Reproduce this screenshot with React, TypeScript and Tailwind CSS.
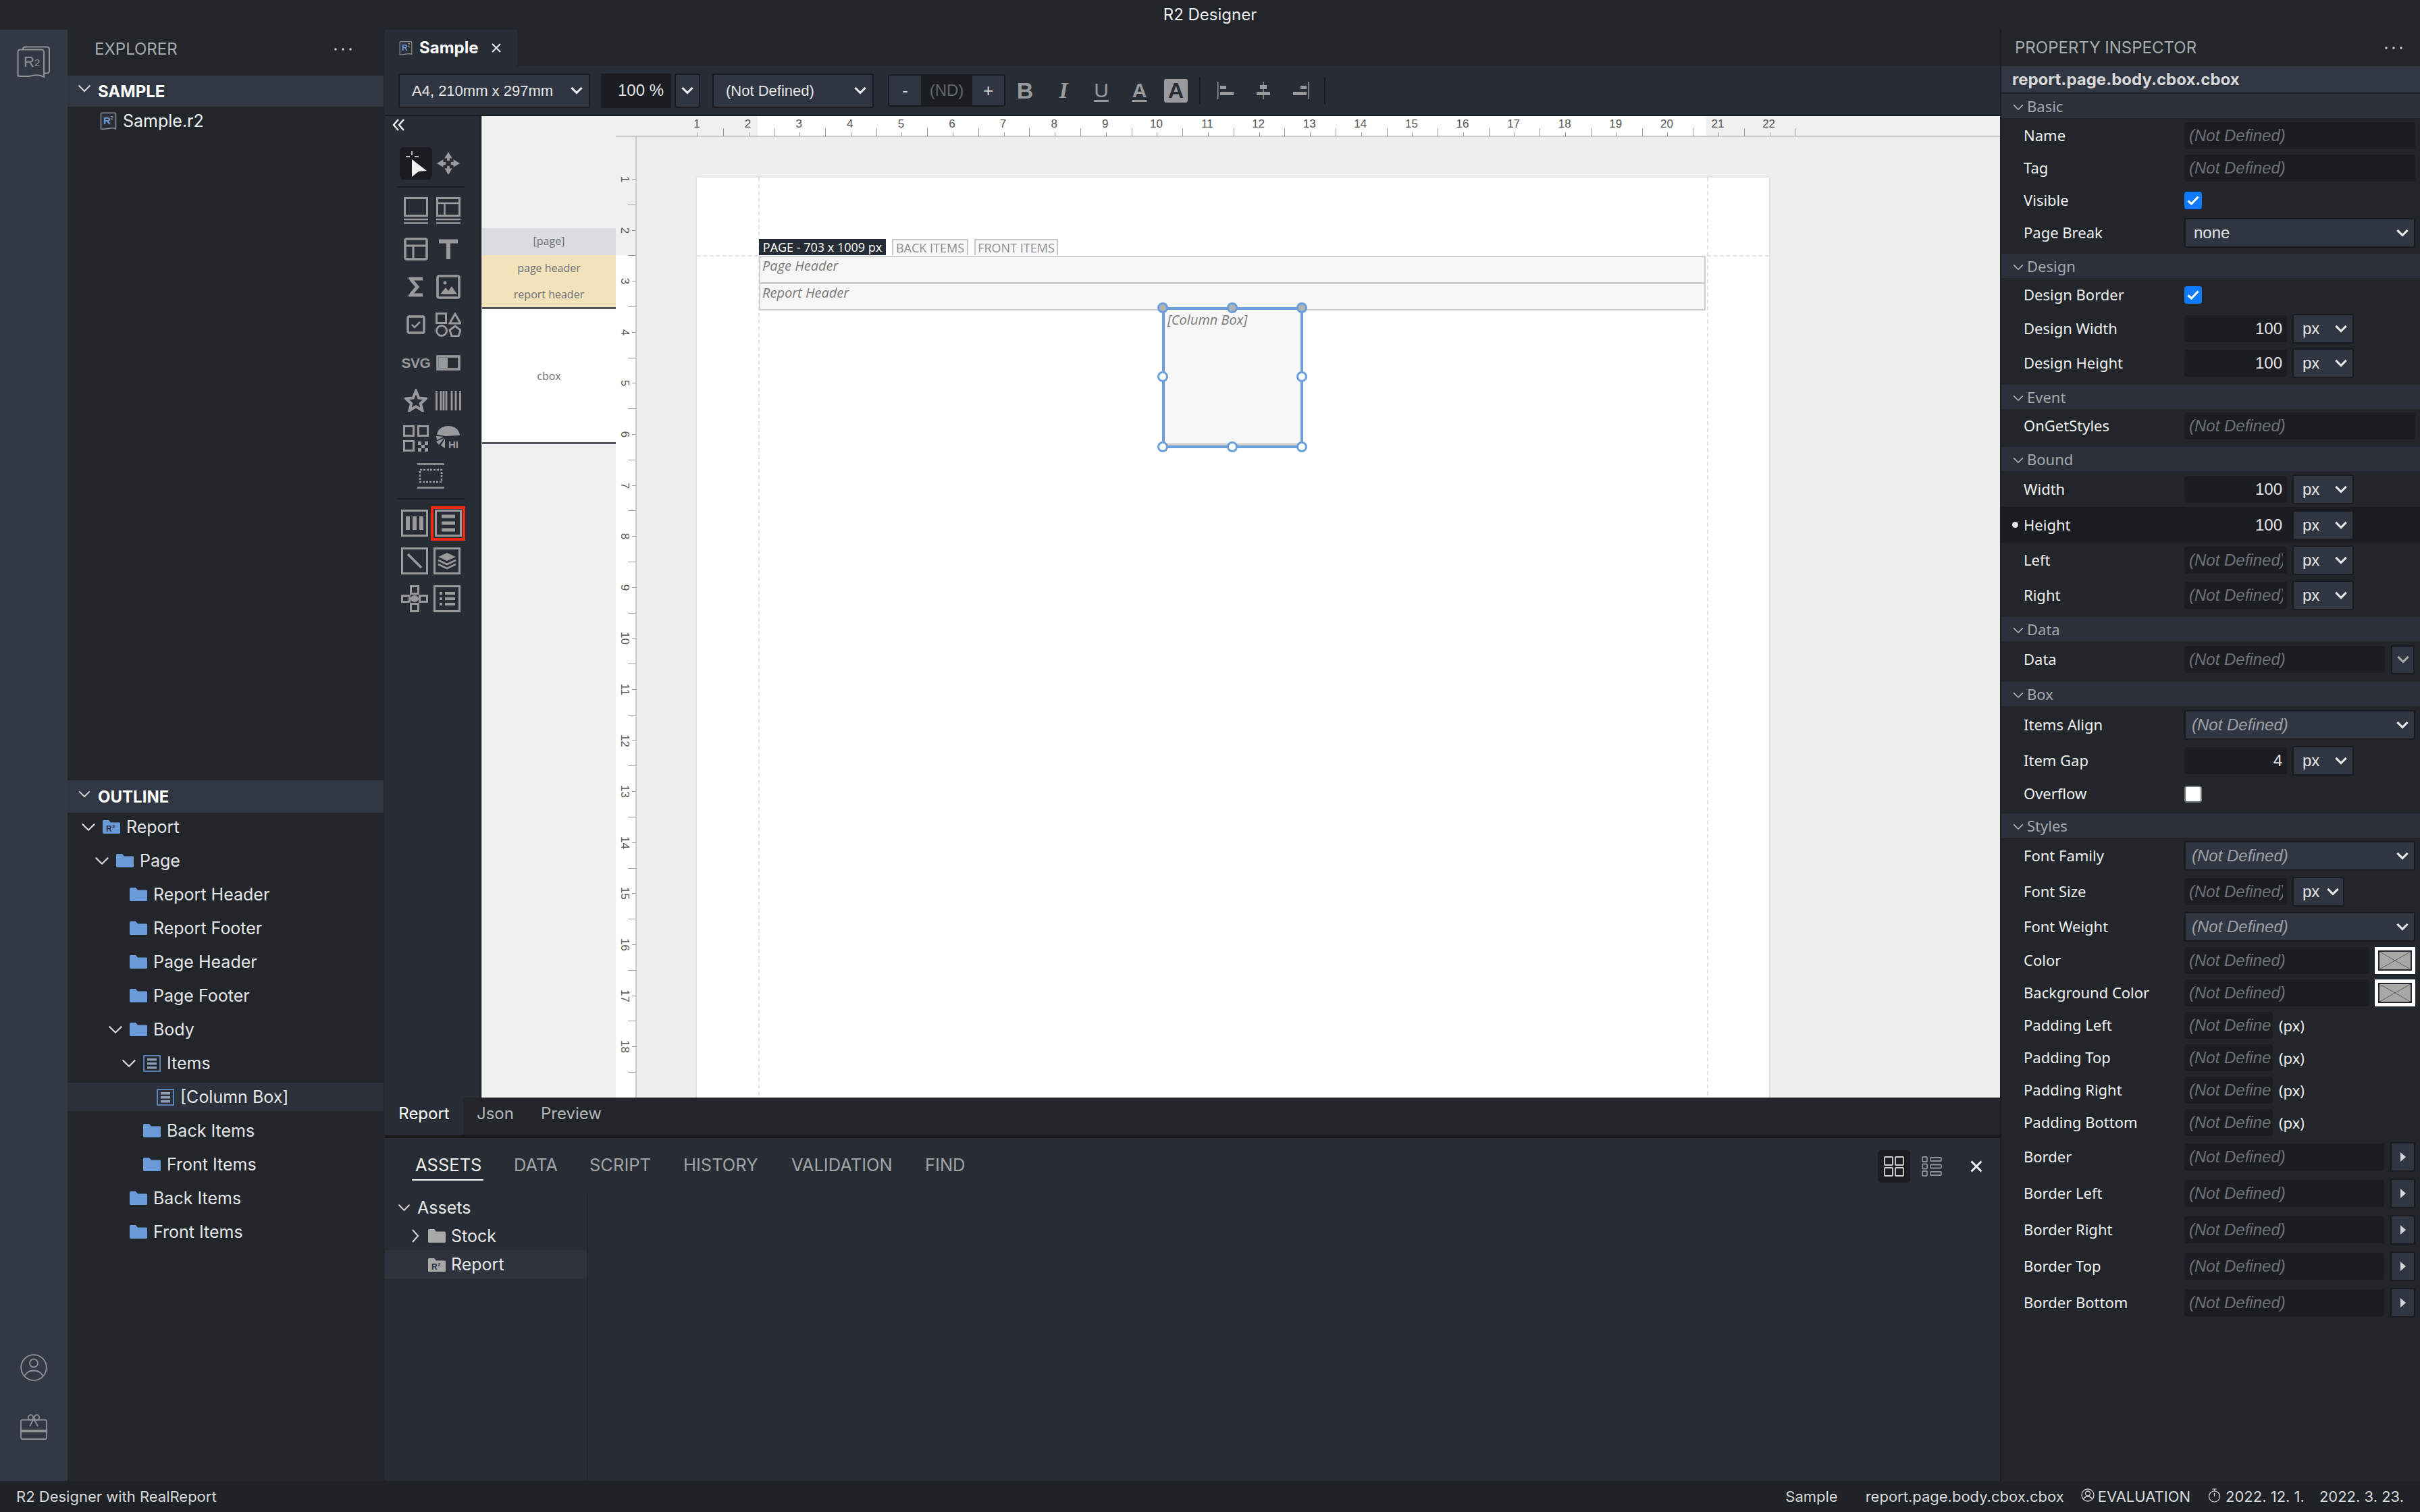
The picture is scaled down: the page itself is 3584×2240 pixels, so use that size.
import React from "react";

const SANS = "font-['Inter',sans-serif]";
const NOTO = "font-['Noto_Sans',sans-serif]";
const ARIAL = "font-['Liberation_Sans',sans-serif]";
const OPEN = "font-['Open_Sans',sans-serif]";

function Chevron({ className, color = "#d8d8d8", sw = 2 }: { className?: string; color?: string; sw?: number }) {
  return (
    <svg viewBox="0 0 20 12" className={className} fill="none" stroke={color} strokeWidth={sw}>
      <polyline points="1.5,1.5 10,10 18.5,1.5" />
    </svg>
  );
}

function Dots() {
  return (
    <svg viewBox="0 0 26 4" className="w-[26px] h-[4px]" fill="#cfcfcf">
      <circle cx="2" cy="2" r="1.8" />
      <circle cx="13" cy="2" r="1.8" />
      <circle cx="24" cy="2" r="1.8" />
    </svg>
  );
}

function Folder({ color = "#6a9bd8", className = "w-[26px] h-[20px]" }: { color?: string; className?: string }) {
  return (
    <svg viewBox="0 0 26 20" className={className} fill={color}>
      <path d="M0 1.5C0 .7.7 0 1.5 0H9l3 3.5h12.5c.8 0 1.5.7 1.5 1.5v13.500c0 .8-.7 1.500-1.500 1.500h-23C.7 20 0 19.300 0 18.500z" />
    </svg>
  );
}

function R2Folder({ color = "#6a9bd8" }: { color?: string }) {
  return (
    <svg viewBox="0 0 26 20" className="w-[26px] h-[20px]">
      <path fill={color} d="M0 1.500C0 .7.7 0 1.500 0H9l3 3.500h12.500c.8 0 1.500.7 1.500 1.500v13.500c0 .8-.7 1.500-1.500 1.500h-23C.7 20 0 19.300 0 18.500z" />
      <text x="5" y="16.500" fontSize="12" fontWeight="700" fill="#2a3340" fontFamily="Liberation Sans">R</text>
      <text x="14" y="12" fontSize="8" fontWeight="700" fill="#2a3340" fontFamily="Liberation Sans">2</text>
    </svg>
  );
}

function R2File({ className }: { className: string }) {
  return (
    <svg viewBox="0 0 25 26" className={className}>
      <path d="M1.500 3c0-1 .8-1.800 1.800-1.800h18.400c1 0 1.800.8 1.800 1.800v22c-3-1.800-5-1.800-11-.5-5 1-8 .8-11 .5z" fill="#2a2e36" stroke="#8d9096" strokeWidth="1.500" />
      <text x="5" y="18" fontSize="15" fontWeight="700" fill="#6a9bd8" fontFamily="Liberation Sans">R</text>
      <text x="15.500" y="11" fontSize="8" fill="#c0c0c0" fontFamily="Liberation Sans">2</text>
    </svg>
  );
}

function ListBox({ className = "w-[26px] h-[20px]" }: { className?: string }) {
  return (
    <svg viewBox="0 0 26 25" className={className} fill="none">
      <rect x="1" y="1" width="24" height="23" stroke="#6a9bd8" strokeWidth="1.600" />
      <rect x="6" y="5" width="14" height="3.500" fill="#8f9fb5" />
      <rect x="6" y="11" width="14" height="3.500" fill="#8f9fb5" />
      <rect x="6" y="17" width="14" height="3.500" fill="#8f9fb5" />
    </svg>
  );
}

function TreeRow({ level, label, open, icon, selected }: { level: number; label: string; open?: boolean; icon?: "r2" | "list"; selected?: boolean }) {
  return (
    <div
      className={`flex h-[42px] items-center w-[468px] ${selected ? "bg-[#2d313b]" : ""}`}
      style={{ paddingLeft: 20 + 20 * level }}
    >
      <div className="w-[32px]">{open && <Chevron className="w-[22px] h-[13px]" />}</div>
      {icon === "r2" ? <R2Folder /> : icon === "list" ? <ListBox className="w-[26px] h-[25px]" /> : <Folder />}
      <span className="ml-[9px] text-[25px] leading-none text-[#e6e6e8]">{label}</span>
    </div>
  );
}

function Explorer() {
  return (
    <div className="flex w-[470px] shrink-0 flex-col bg-[#22252a]">
      <div className="flex h-[68px] items-center justify-between pb-[10px] pl-[40px] pr-[49px]">
        <span className="text-[24px] leading-none text-[#a9abae]">EXPLORER</span>
        <Dots />
      </div>
      <div className="flex h-[46px] items-center bg-[#303742] pl-[15px] w-[468px]">
        <Chevron className="w-[20px] h-[12px] mb-[8px]" />
        <span className="ml-[10px] pt-[1px] text-[24px] font-bold leading-none text-white">SAMPLE</span>
      </div>
      <div className="flex h-[42px] items-center pl-[48px]">
        <R2File className="w-[25px] h-[26px]" />
        <span className="ml-[9px] text-[25px] leading-none text-[#f0f0f0]">Sample.r2</span>
      </div>
      <div className="h-[956px]" />
      <div className="flex h-[48px] items-center bg-[#303742] pl-[15px] w-[468px]">
        <Chevron className="w-[20px] h-[11px] mb-[8px]" />
        <span className="ml-[10px] pt-[2px] text-[24px] font-bold leading-none text-white">OUTLINE</span>
      </div>
      <div className="flex flex-col gap-[8px]">
        <TreeRow level={0} label="Report" open icon="r2" />
        <TreeRow level={1} label="Page" open />
        <TreeRow level={2} label="Report Header" />
        <TreeRow level={2} label="Report Footer" />
        <TreeRow level={2} label="Page Header" />
        <TreeRow level={2} label="Page Footer" />
        <TreeRow level={2} label="Body" open />
        <TreeRow level={3} label="Items" open icon="list" />
        <TreeRow level={4} label="[Column Box]" icon="list" selected />
        <TreeRow level={3} label="Back Items" />
        <TreeRow level={3} label="Front Items" />
        <TreeRow level={2} label="Back Items" />
        <TreeRow level={2} label="Front Items" />
      </div>
    </div>
  );
}

function Sidebar() {
  return (
    <div className="flex w-[100px] shrink-0 flex-col items-center justify-between bg-[#323844] pt-[24px] pb-[61px]">
      <svg viewBox="0 0 50 48" className="w-[50px] h-[48px]" fill="none" stroke="#8f9298" strokeWidth="2">
        <path d="M9 5c0-2 1.500-3.500 3.500-3.500h32c2 0 3.500 1.500 3.500 3.500v32c0 2-1.500 3.500-3.500 3.500H41" />
        <path d="M1.500 9c0-2 1.500-3.500 3.500-3.500h31C38 5.500 40 7 40 9v37c-5-3-10-3.500-18-1.800-8 1.500-14 1-20.500.3z" fill="#323844" />
        <text x="10" y="31" fontSize="22" fill="#8f9298" stroke="none" fontFamily="Liberation Sans">R</text>
        <text x="26" y="30" fontSize="15" fill="#8f9298" stroke="none" fontFamily="Liberation Sans">2</text>
      </svg>
      <div className="flex flex-col items-center gap-[49px]">
        <svg viewBox="0 0 40 40" className="w-[40px] h-[40px]" fill="none" stroke="#8f9298" strokeWidth="1.800">
          <circle cx="20" cy="20" r="18.800" />
          <circle cx="20" cy="13.500" r="6" />
          <path d="M6.500 32c3-5 8-7.500 13.500-7.500S30.500 27 33.500 32" />
        </svg>
        <svg viewBox="0 0 40 38" className="w-[40px] h-[38px]" fill="none" stroke="#8f9298" strokeWidth="1.800">
          <rect x="1" y="8.500" width="38" height="28.500" rx="2" />
          <path d="M1 25h38" strokeWidth="4" />
          <circle cx="15.500" cy="5" r="3.800" />
          <circle cx="24.500" cy="5" r="3.800" />
          <path d="M20 7l-6 11M20 7l6 11" />
        </svg>
      </div>
    </div>
  );
}

function Sel({ text, className, italic, chevronRight = "right-[9px]", font = "text-[24px]", pad = "pl-[10px]" }: { text?: string; className: string; italic?: boolean; chevronRight?: string; font?: string; pad?: string }) {
  return (
    <div className={`relative flex items-center rounded-[3px] border-2 border-[#191b20] bg-[#2f3642] ${ARIAL} ${font} ${pad} ${className}`}>
      {text && <span className={italic ? "italic text-[#9ea0a5]" : "text-[#e4e4e6]"}>{text}</span>}
      <Chevron className={`absolute top-1/2 -translate-y-1/2 w-[18px] h-[12px] ${chevronRight}`} color="#e8e8e8" sw={3.500} />
    </div>
  );
}

function Inp({ className = "w-[342px]", value, text = "(Not Defined)", clip }: { className?: string; value?: string; text?: string; clip?: boolean }) {
  return (
    <div className={`flex h-[40px] items-center overflow-hidden rounded-[4px] bg-[#1b1d22] ${ARIAL} text-[24px] whitespace-nowrap ${value ? "justify-end pr-[7px] text-[#e4e4e6]" : "pl-[7px] italic text-[#6f7177]"} ${clip ? "pr-[6px]" : ""} ${className}`}>
      <span className="overflow-hidden">{value ?? text}</span>
    </div>
  );
}

function Px() {
  return <Sel text="px" className="ml-[8px] w-[91px] h-[44px]" chevronRight="right-[8px]" pad="pl-[13px]" />;
}

function Check({ on }: { on?: boolean }) {
  if (!on) return <div className="h-[25px] w-[26px] rounded-[4px] border-2 border-[#7a7a7e] bg-white" />;
  return (
    <div className="flex h-[26px] w-[26px] items-center justify-center rounded-[4px] bg-[#0f7afc]">
      <svg viewBox="0 0 18 14" className="w-[18px] h-[14px]" fill="none" stroke="#fff" strokeWidth="3.200">
        <polyline points="1.500,7.500 6.500,12 16.500,1.500" />
      </svg>
    </div>
  );
}

function Swatch() {
  return (
    <div className="ml-[8px] h-[40px] w-[60px] border-[5px] border-white bg-[#24262b] p-[2px]">
      <svg viewBox="0 0 46 26" className="w-full h-full bg-[#a7a9a7]" preserveAspectRatio="none" fill="none" stroke="#5c5e60" strokeWidth="1">
        <path d="M0 0l46 26M46 0L0 26" />
      </svg>
    </div>
  );
}

function Arrow() {
  return (
    <div className="ml-[9px] flex h-[44px] w-[37px] items-center justify-center rounded-[3px] border-2 border-[#191b20] bg-[#2f3642]">
      <svg viewBox="0 0 8 14" className="w-[8px] h-[14px]" fill="#d5d5d5">
        <path d="M0 0l8 7-8 7z" />
      </svg>
    </div>
  );
}

function Group({ title, className }: { title: string; className?: string }) {
  return (
    <div className={`flex h-[36px] items-center bg-[#2b303a] pl-[17px] ${className ?? ""}`}>
      <Chevron className="w-[16px] h-[10px] mt-[3px]" color="#b5b7bb" />
      <span className={`ml-[5px] mb-[1px] ${NOTO} text-[22px] leading-none text-[#a5a8ad]`}>{title}</span>
    </div>
  );
}

function Prop({ label, h, children, active }: { label: string; h: string; children?: React.ReactNode; active?: boolean }) {
  return (
    <div className={`relative flex items-center ${h} ${active ? "bg-[#1a1c21]" : ""}`}>
      {active && <div className="absolute left-[16px] h-[9px] w-[9px] rounded-full bg-[#e6e6e6]" />}
      <span className={`mb-[2px] w-[271px] shrink-0 pl-[33px] ${NOTO} text-[22px] leading-none text-[#f0f0f0]`}>{label}</span>
      <div className="flex items-center">{children}</div>
    </div>
  );
}

const shortInp = "w-[152px]";
const padInp = "w-[131px]";
const colorInp = "w-[274px]";
const bordInp = "w-[296px]";

function PxField({ value }: { value?: string }) {
  return (
    <>
      <Inp className={shortInp} value={value} clip />
      <Px />
    </>
  );
}

function Inspector() {
  return (
    <div className="flex w-[622px] shrink-0 flex-col border-l-2 border-[#1a1c20] bg-[#22252a]">
      <div className="flex h-[54px] items-center justify-between pl-[20px] pr-[26px]">
        <span className="text-[24px] leading-none text-[#a9abae]">PROPERTY INSPECTOR</span>
        <Dots />
      </div>
      <div className="flex h-[40px] items-center border-b border-[#1a1c20] bg-[#303742] pl-[16px] text-[24px] font-bold leading-none text-[#d8d8da]">
        report.page.body.cbox.cbox
      </div>
      <Group title="Basic" className="mt-[1px]" />
      <Prop label="Name" h="h-[48px] mt-[2px]"><Inp /></Prop>
      <Prop label="Tag" h="h-[48px]"><Inp /></Prop>
      <Prop label="Visible" h="h-[47px]"><Check on /></Prop>
      <Prop label="Page Break" h="h-[49px]">
        <Sel text="none" className="w-[342px] h-[44px]" chevronRight="right-[8px]" pad="pl-[12px]" />
      </Prop>
      <Group title="Design" className="mt-[7px]" />
      <Prop label="Design Border" h="h-[50px]"><Check on /></Prop>
      <Prop label="Design Width" h="h-[50px]"><PxField value="100" /></Prop>
      <Prop label="Design Height" h="h-[52px]"><PxField value="100" /></Prop>
      <Group title="Event" className="mt-[6px]" />
      <Prop label="OnGetStyles" h="h-[50px]"><Inp /></Prop>
      <Group title="Bound" className="mt-[6px]" />
      <Prop label="Width" h="h-[53px]"><PxField value="100" /></Prop>
      <Prop label="Height" h="h-[53px]" active><PxField value="100" /></Prop>
      <Prop label="Left" h="h-[52px]"><PxField /></Prop>
      <Prop label="Right" h="h-[52px]"><PxField /></Prop>
      <Group title="Data" className="mt-[6px]" />
      <Prop label="Data" h="h-[54px]">
        <Inp className="w-[297px]" />
        <div className="ml-[9px] flex h-[43px] w-[35px] items-center justify-center rounded-[3px] border-2 border-[#191b20] bg-[#2f3642]">
          <Chevron className="w-[18px] h-[12px]" color="#a5a7ab" sw={3.500} />
        </div>
      </Prop>
      <Group title="Box" className="mt-[6px]" />
      <Prop label="Items Align" h="h-[55px]">
        <Sel text="(Not Defined)" italic className="w-[342px] h-[44px]" chevronRight="right-[8px]" pad="pl-[9px]" />
      </Prop>
      <Prop label="Item Gap" h="h-[52px]"><PxField value="4" /></Prop>
      <Prop label="Overflow" h="h-[46px]"><Check /></Prop>
      <Group title="Styles" className="mt-[6px]" />
      <Prop label="Font Family" h="h-[54px]">
        <Sel text="(Not Defined)" italic className="w-[342px] h-[44px]" chevronRight="right-[8px]" pad="pl-[9px]" />
      </Prop>
      <Prop label="Font Size" h="h-[52px]">
        <Inp className={shortInp} clip />
        <Sel text="px" className="ml-[8px] w-[77px] h-[44px]" chevronRight="right-[6px]" pad="pl-[13px]" />
      </Prop>
      <Prop label="Font Weight" h="h-[52px]">
        <Sel text="(Not Defined)" italic className="w-[342px] h-[44px]" chevronRight="right-[8px]" pad="pl-[9px]" />
      </Prop>
      <Prop label="Color" h="h-[48px]"><Inp className={colorInp} /><Swatch /></Prop>
      <Prop label="Background Color" h="h-[48px]"><Inp className={colorInp} /><Swatch /></Prop>
      {["Padding Left", "Padding Top", "Padding Right", "Padding Bottom"].map((l) => (
        <Prop key={l} label={l} h="h-[48px]">
          <Inp className={padInp} text="(Not Define" />
          <span className={`ml-[9px] ${NOTO} text-[22px] leading-none text-[#f0f0f0]`}>(px)</span>
        </Prop>
      ))}
      {["Border", "Border Left", "Border Right", "Border Top", "Border Bottom"].map((l) => (
        <Prop key={l} label={l} h="h-[54px]">
          <Inp className={bordInp} />
          <Arrow />
        </Prop>
      ))}
    </div>
  );
}

/* tool palette icons */
const G = "#999a9c";

function Tool({ w, h, vb, children }: { w: number; h: number; vb?: string; children: React.ReactNode }) {
  return (
    <svg width={w} height={h} viewBox={vb ?? `0 0 ${w} ${h}`} fill="none" stroke={G} strokeWidth="3">
      {children}
    </svg>
  );
}

const tools: React.ReactNode[][] = [
  [
    <Tool w={36} h={42} key="a">
      <rect x="1.500" y="1.500" width="33" height="26" />
      <path d="M0 33h36M0 38.500h36" strokeWidth="2.500" />
    </Tool>,
    <Tool w={36} h={42} key="b">
      <rect x="1.500" y="1.500" width="33" height="26" />
      <path d="M1.500 9h33M12.500 9v18M0 33h36M0 38.500h36" strokeWidth="2.500" />
    </Tool>,
  ],
  [
    <Tool w={36} h={34} key="a">
      <rect x="2" y="2" width="32" height="30" rx="2" strokeWidth="3.500" />
      <path d="M2 12h32M14 12v20" />
    </Tool>,
    <Tool w={28} h={30} key="b">
      <path d="M0 3.500h28M14 3.500V30" strokeWidth="6" />
    </Tool>,
  ],
  [
    <Tool w={22} h={30} key="a">
      <path d="M21 3H3l10 12L3 27h18" strokeWidth="5" />
    </Tool>,
    <Tool w={36} h={36} key="b">
      <rect x="2" y="2" width="32" height="32" rx="2" strokeWidth="3.500" />
      <circle cx="13" cy="12" r="2.500" fill={G} stroke="none" />
      <path d="M6 29l8-10 4 5 5-7 8 12z" fill={G} stroke="none" />
    </Tool>,
  ],
  [
    <Tool w={28} h={28} key="a">
      <rect x="2" y="2" width="24" height="24" rx="2" strokeWidth="3.500" />
      <path d="M8 14l4 4 8-8" strokeWidth="2.500" />
    </Tool>,
    <Tool w={38} h={36} key="b">
      <rect x="1.500" y="1.500" width="14" height="14" />
      <path d="M29 2l8 14H21z" />
      <circle cx="9" cy="27" r="7.500" />
      <path d="M29 20l8 6-3 9h-10l-3-9z" />
    </Tool>,
  ],
  [
    <span key="a" className={`${ARIAL} text-[21px] font-bold leading-none tracking-[-0.5px] text-[#999a9c]`}>SVG</span>,
    <Tool w={36} h={23} key="b">
      <rect x="2" y="2" width="32" height="19" strokeWidth="3.500" />
      <rect x="4" y="4" width="13" height="15" fill={G} stroke="none" />
    </Tool>,
  ],
  [
    <Tool w={34} h={34} key="a">
      <path d="M17 3l4.200 10.500L32 14.500l-8.200 7.200L26.500 32 17 26.300 7.500 32l2.700-10.300L2 14.500l10.800-1z" strokeWidth="4" />
    </Tool>,
    <Tool w={38} h={29} key="b">
      <path d="M1.500 0v29M8 0v29M12 0v29M16 0v29M24 0v29M30 0v29M36.500 0v29" strokeWidth="2.800" />
    </Tool>,
  ],
  [
    <Tool w={38} h={39} key="a">
      <rect x="1.500" y="1.500" width="14" height="14" />
      <rect x="22.500" y="1.500" width="14" height="14" />
      <rect x="1.500" y="23.500" width="14" height="14" />
      <path d="M22 24h5v5h-5zM32 24h5v5h-5zM27 29h5v5h-5zM22 34h5v5h-5zM32 34h5v5h-5z" fill={G} stroke="none" />
    </Tool>,
    <svg key="b" width={38} height={36} viewBox="0 0 38 36" fill={G}>
      <path d="M2 13C3 5 10 0 19 0s16 5 17 14l-21 1z" />
      <path d="M1 15l11 1-10 5zM1 23l12-5-8 10zM8 29l6-10v14z" />
      <text x="19" y="33" fontSize="15" fontWeight="700" fontFamily="Liberation Sans">HI</text>
    </svg>,
  ],
];

function Palette() {
  return (
    <div className="flex w-[142px] shrink-0 flex-col border-r-2 border-[#1a1c20] bg-[#282c35] pl-[20px]">
      <svg viewBox="0 0 20 18" className="mt-[4px] ml-[-9px] w-[20px] h-[18px]" fill="none" stroke="#f0f0f0" strokeWidth="2.500">
        <path d="M9 1L2 9l7 8M17 1l-7 8 7 8" />
      </svg>
      <div className="mt-[24px] grid grid-cols-[48px_48px] pl-[2px]">
        <div className="flex h-[48px] w-[48px] items-center justify-center rounded-[6px] bg-[#1a1c21]">
          <svg viewBox="0 0 48 48" className="w-[48px] h-[48px]" fill="#f2f2f2">
            <path d="M18 18l22 17-12 1-10 8z" />
            <path d="M18 6v6M9 14h6M22 14h6" stroke="#f2f2f2" strokeWidth="1.500" />
          </svg>
        </div>
        <div className="flex h-[48px] w-[48px] items-center justify-center">
          <svg viewBox="0 0 36 36" className="w-[34px] h-[36px]" fill={G}>
            <path d="M18 0l6 10h-4v4h-4v-4h-4zM18 36l-6-10h4v-4h4v4h4zM0 18l10-6v4h4v4h-4v4zM36 18l-10 6v-4h-4v-4h4v-4z" />
          </svg>
        </div>
      </div>
      <div className="mt-[10px] ml-[-2px] h-[2px] w-[100px] bg-[#1a1c21]" />
      <div className="mt-[7px] grid grid-cols-[48px_48px] pl-[2px]">
        {tools.map((row, i) => (
          <React.Fragment key={i}>
            <div className="flex h-[56px] items-center justify-center">{row[0]}</div>
            <div className="flex h-[56px] items-center justify-center">{row[1]}</div>
          </React.Fragment>
        ))}
      </div>
      <div className="flex h-[56px] w-[100px] items-center justify-center ml-[-2px]">
        <Tool w={40} h={38}>
          <path d="M0 1.500h40M0 36.500h40" strokeWidth="2.500" />
          <rect x="4" y="10" width="32" height="18" strokeWidth="2.500" strokeDasharray="3 2" />
        </Tool>
      </div>
      <div className="mt-[5px] ml-[-2px] h-[2px] w-[100px] bg-[#1a1c21]" />
      <div className="mt-[7px] ml-[4px] grid grid-cols-[43px_53px]">
        <div className="flex h-[56px] items-center">
          <Tool w={40} h={40}>
            <rect x="1.500" y="1.500" width="37" height="37" />
            <path d="M10 10v20M20 10v20M30 10v20" strokeWidth="6" />
          </Tool>
        </div>
        <div className="flex h-[56px] items-center justify-center">
          <div className="flex h-[51px] w-[51px] items-center justify-center border-[4px] border-[#f02a12]">
            <Tool w={40} h={40}>
              <rect x="1.500" y="1.500" width="37" height="37" />
              <path d="M10 10h20M10 20h20M10 30h20" strokeWidth="5" />
            </Tool>
          </div>
        </div>
        <div className="flex h-[56px] items-center">
          <Tool w={40} h={40}>
            <rect x="1.500" y="1.500" width="37" height="37" />
            <path d="M10 10l20 20" strokeWidth="3.500" />
          </Tool>
        </div>
        <div className="flex h-[56px] items-center pl-[5px]">
          <Tool w={40} h={40}>
            <rect x="1.500" y="1.500" width="37" height="37" />
            <path d="M20 8l13 6-13 6-13-6z" fill={G} stroke="none" />
            <path d="M7 19l13 6 13-6M7 25l13 6 13-6" strokeWidth="2.500" />
          </Tool>
        </div>
        <div className="flex h-[56px] items-center">
          <Tool w={40} h={40}>
            <rect x="14.500" y="1.500" width="11" height="11" />
            <rect x="14.500" y="27.500" width="11" height="11" />
            <rect x="1.500" y="15.500" width="11" height="9" />
            <rect x="27.500" y="15.500" width="11" height="9" />
            <ellipse cx="20" cy="20" rx="6" ry="5" fill={G} stroke="none" />
          </Tool>
        </div>
        <div className="flex h-[56px] items-center pl-[5px]">
          <Tool w={40} h={40}>
            <rect x="1.500" y="1.500" width="37" height="37" />
            <path d="M9 12h4M17 12h15M9 20h4M17 20h15M9 28h4M17 28h15" strokeWidth="4" />
          </Tool>
        </div>
      </div>
    </div>
  );
}

function BandList() {
  return (
    <div className={`flex w-[200px] shrink-0 flex-col bg-[#f0f0f0] border-l-2 border-[#8a8a8e] ${OPEN} text-[16px] text-[#6d6f75]`}>
      <div className="h-[166px]" />
      <div className="flex h-[40px] items-center justify-center bg-[#dbdce0] pb-[3px]">[page]</div>
      <div className="flex h-[40px] items-center justify-center bg-[#f3e3ba] pb-[3px]">page header</div>
      <div className="flex h-[40px] items-center justify-center border-b-[3px] border-[#55565c] bg-[#f3e3ba] pb-[1px]">report header</div>
      <div className="flex h-[200px] items-center justify-center border-b-[3px] border-[#55565c] bg-white">cbox</div>
    </div>
  );
}

const CM = 75.6;
const cmMarks = Array.from({ length: 22 }, (_, i) => i + 1);

/* rulers and the report page sit on a free canvas, so they are placed by offset */
function Canvas() {
  return (
    <div className={`relative flex-1 overflow-hidden border-r-0 bg-[#eeeeee] ${OPEN}`}>
      {/* top ruler */}
      <div className="absolute left-0 top-0 h-[31px] w-full border-b-2 border-[#cacaca] bg-[#f0f0f0]" />
      <div className="absolute left-[210px] top-0 h-[31px] w-[1405px] border-b-2 border-[#cacaca] bg-white" />
      {cmMarks.map((n) => (
        <React.Fragment key={n}>
          <span
            className="absolute top-[3px] w-[30px] text-center font-['Liberation_Sans',sans-serif] text-[17px] leading-none text-[#555]"
            style={{ left: 120 + (n - 1) * CM - 15 }}
          >
            {n}
          </span>
          <div className="absolute top-[24px] h-[6px] w-[1px] bg-[#9a9a9a]" style={{ left: 121 + (n - 1) * CM }} />
          <div className="absolute top-[18px] h-[12px] w-[1px] bg-[#9a9a9a]" style={{ left: 121 + (n - 1) * CM + CM / 2 }} />
        </React.Fragment>
      ))}
      {/* left ruler */}
      <div className="absolute left-0 top-[31px] h-[175px] w-[31px] border-r-2 border-[#cacaca] bg-[#f0f0f0]" />
      <div className="absolute left-0 top-[206px] bottom-0 w-[31px] border-r-2 border-[#cacaca] bg-white" />
      {Array.from({ length: 18 }, (_, i) => i + 1).map((n) => (
        <React.Fragment key={n}>
          <span
            className="absolute left-[1px] w-[24px] rotate-90 text-center font-['Liberation_Sans',sans-serif] text-[17px] leading-none text-[#555]"
            style={{ top: 94 + (n - 1) * CM - 9 }}
          >
            {n}
          </span>
          <div className="absolute left-[24px] h-[1px] w-[6px] bg-[#9a9a9a]" style={{ top: 93 + (n - 1) * CM }} />
          <div className="absolute left-[18px] h-[1px] w-[12px] bg-[#9a9a9a]" style={{ top: 93 + (n - 1) * CM + CM / 2 }} />
        </React.Fragment>
      ))}
      {/* page */}
      <div className="absolute left-[120px] top-[91px] h-[1500px] w-[1588px] bg-white shadow-[0_0_4px_rgba(0,0,0,0.12)]">
        <div className="absolute left-[91px] top-0 h-full border-l-2 border-dashed border-[#e2e3e6]" />
        <div className="absolute left-[1496px] top-0 h-full border-l-2 border-dashed border-[#e2e3e6]" />
        <div className="absolute left-0 top-[115px] w-[91px] border-t-2 border-dashed border-[#e2e3e6]" />
        <div className="absolute left-[1496px] top-[115px] w-[92px] border-t-2 border-dashed border-[#e2e3e6]" />
        <div className="absolute left-[92px] top-[91px] flex gap-[9px]">
          <div className="flex h-[24px] w-[188px] items-center justify-center bg-[#282c35] text-[18px] leading-none text-white">PAGE - 703 x 1009 px</div>
          <div className="flex h-[24px] w-[113px] items-center justify-center border-2 border-b-0 border-[#c8c8c8] bg-[#f8f8f8] text-[18px] leading-none text-[#8d8d8d]">BACK ITEMS</div>
          <div className="flex h-[24px] w-[124px] items-center justify-center border-2 border-b-0 border-[#c8c8c8] bg-[#f8f8f8] text-[18px] leading-none text-[#8d8d8d]">FRONT ITEMS</div>
        </div>
        <div className="absolute left-[92px] top-[116px] h-[41px] w-[1402px] border-2 border-[#cfcfcf] bg-[#f7f7f7] pl-[3px] pt-[1px] text-[20px] italic leading-[24px] text-[#7a7a7a]">Page Header</div>
        <div className="absolute left-[92px] top-[156px] h-[41px] w-[1402px] border-2 border-[#cfcfcf] bg-[#f7f7f7] pl-[3px] pt-[1px] text-[20px] italic leading-[24px] text-[#7a7a7a]">Report Header</div>
        {/* selected column box */}
        <div className="absolute left-[689px] top-[192px] h-[209px] w-[209px] border-[4px] border-[#6a9fdc] bg-[#f7f7f7] pl-[4px] pt-[2px] text-[20px] italic leading-[26px] text-[#7a7a7a]">
          [Column Box]
          <div className="absolute bottom-0 left-0 right-0 h-[3px] bg-[#c8c8c8]" />
          {[
            "left-[-11px] top-[-11px] bg-[#b0b2b4]",
            "left-[92px] top-[-11px] bg-[#b0b2b4]",
            "right-[-10px] top-[-11px] bg-[#b0b2b4]",
            "left-[-11px] top-[91px] bg-white",
            "right-[-10px] top-[91px] bg-white",
            "left-[-11px] bottom-[-10px] bg-white",
            "left-[92px] bottom-[-10px] bg-white",
            "right-[-10px] bottom-[-10px] bg-white",
          ].map((c) => (
            <div key={c} className={`absolute h-[16px] w-[16px] rounded-full border-[3px] border-[#6a9fdc] ${c}`} />
          ))}
        </div>
      </div>
    </div>
  );
}

function Btn({ glyph }: { glyph: React.ReactNode }) {
  return <div className="flex h-[44px] w-[47px] items-center justify-center bg-[#2f3642] text-[26px] text-[#d8d8d8]">{glyph}</div>;
}

function AlignIcon({ kind }: { kind: "l" | "c" | "r" }) {
  return (
    <svg viewBox="0 0 26 26" className="w-[26px] h-[26px]" fill={G}>
      {kind === "l" && <path d="M1 0h1.500v26H1zM5 6h9v5H5zM5 15h20v5H5z" />}
      {kind === "c" && <path d="M12.300 0h1.500v26h-1.500zM8 5h10v6H8zM3 15h20v5H3z" />}
      {kind === "r" && <path d="M23.500 0H25v26h-1.500zM12 6h9v5h-9zM1 15h20v5H1z" />}
    </svg>
  );
}

function Toolbar() {
  return (
    <div className="flex h-[74px] items-center border-b-2 border-[#1a1c20] bg-[#282c35] pl-[20px]">
      <Sel text="A4, 210mm x 297mm" className="w-[284px] h-[51px]" font="text-[22px]" pad="pl-[18px]" />
      <div className={`ml-[16px] flex h-[51px] w-[104px] items-center justify-start bg-[#1b1d22] pl-[25px] ${ARIAL} text-[24px] text-[#e4e4e6]`}>100 %</div>
      <Sel className="ml-[5px] w-[38px] h-[51px]" chevronRight="right-[8px]" />
      <Sel text="(Not Defined)" className="ml-[18px] w-[239px] h-[51px]" font="text-[22px]" pad="pl-[18px]" />
      <div className={`ml-[21px] flex h-[48px] w-[174px] items-center rounded-[4px] border-2 border-[#191b20] bg-[#1b1d22] ${ARIAL}`}>
        <Btn glyph="-" />
        <span className="flex-1 text-center text-[24px] text-[#64666b]">(ND)</span>
        <Btn glyph="+" />
      </div>
      <div className={`flex items-center ${ARIAL} text-[#9a9a9c]`}>
        <span className="flex w-[58px] justify-center text-[34px] font-bold leading-none">B</span>
        <span className="flex w-[56px] justify-center text-[34px] italic font-bold leading-none font-['Liberation_Serif',serif]">I</span>
        <span className="flex w-[56px] justify-center text-[30px] leading-none underline decoration-[3px] underline-offset-[4px]">U</span>
        <span className="flex w-[57px] justify-center text-[30px] font-bold leading-none underline decoration-[3px] underline-offset-[4px]">A</span>
        <span className="ml-[8px] flex h-[35px] w-[35px] items-center justify-center rounded-[3px] bg-[#9a9a9c] text-[32px] font-bold leading-none text-[#282c35]">A</span>
      </div>
      <div className="ml-[17px] h-[40px] w-[2px] bg-[#1a1c20]" />
      <div className="ml-[24px] flex w-[138px] items-center justify-between">
        <AlignIcon kind="l" />
        <AlignIcon kind="c" />
        <AlignIcon kind="r" />
      </div>
      <div className="ml-[21px] h-[40px] w-[2px] bg-[#1a1c20]" />
    </div>
  );
}

function BottomPanel() {
  return (
    <div className="flex flex-1 flex-col bg-[#282c35]">
      <div className="relative flex h-[65px] items-start pl-[40px] pt-[25px]">
        <div className="flex w-[151px] flex-col items-start">
          <span className="pl-[5px] text-[25.5px] leading-[30px] text-[#f0f0f0]">ASSETS</span>
          <div className="mt-[6px] h-[2px] w-[106px] bg-white" />
        </div>
        <span className="w-[112px] text-[25.5px] leading-[30px] text-[#a2a4a8]">DATA</span>
        <span className="w-[139px] text-[25.5px] leading-[30px] text-[#a2a4a8]">SCRIPT</span>
        <span className="w-[160px] text-[25.5px] leading-[30px] text-[#a2a4a8]">HISTORY</span>
        <span className="w-[198px] text-[25.5px] leading-[30px] text-[#a2a4a8]">VALIDATION</span>
        <span className="text-[25.5px] leading-[30px] text-[#a2a4a8]">FIND</span>
        <div className="absolute right-[26px] top-[18px] flex items-center">
          <div className="flex h-[48px] w-[48px] items-center justify-center rounded-[5px] bg-[#1b1d22]">
            <svg viewBox="0 0 30 30" className="w-[30px] h-[30px]" fill="none" stroke="#d5d5d5" strokeWidth="1.800">
              <rect x="1" y="1" width="12" height="12" rx="1" />
              <rect x="17" y="1" width="12" height="12" rx="1" />
              <rect x="1" y="17" width="12" height="12" rx="1" />
              <rect x="17" y="17" width="12" height="12" rx="1" />
            </svg>
          </div>
          <svg viewBox="0 0 30 30" className="ml-[17px] w-[30px] h-[30px]" fill="none" stroke="#8f9298" strokeWidth="1.800">
            <rect x="1" y="1" width="7" height="7" rx="1" />
            <rect x="1" y="11.500" width="7" height="7" rx="1" />
            <rect x="1" y="22" width="7" height="7" rx="1" />
            <rect x="13" y="2" width="16" height="5" rx="1" />
            <rect x="13" y="12.500" width="16" height="5" rx="1" />
            <rect x="13" y="23" width="16" height="5" rx="1" />
          </svg>
          <svg viewBox="0 0 18 18" className="ml-[42px] w-[18px] h-[18px]" fill="none" stroke="#f0f0f0" strokeWidth="3">
            <path d="M1.500 1.500l15 15M16.500 1.500l-15 15" />
          </svg>
        </div>
      </div>
      <div className="flex flex-1 pt-[17px]">
        <div className="w-[301px] border-r-2 border-[#23262d] text-[25px] leading-none text-[#e8e8ea]">
          <div className="flex h-[42px] items-center pl-[19px]">
            <Chevron className="w-[19px] h-[12px]" />
            <span className="ml-[10px]">Assets</span>
          </div>
          <div className="flex h-[42px] items-center pl-[40px]">
            <svg viewBox="0 0 10 20" className="w-[10px] h-[20px]" fill="none" stroke="#d8d8d8" strokeWidth="2">
              <path d="M1 1l8 9-8 9" />
            </svg>
            <Folder color="#a8a8a8" className="ml-[14px] w-[26px] h-[20px]" />
            <span className="ml-[8px]">Stock</span>
          </div>
          <div className="flex h-[43px] items-center bg-[#2e323c] pl-[64px]">
            <R2Folder color="#a8a8a8" />
            <span className="ml-[8px]">Report</span>
          </div>
        </div>
      </div>
    </div>
  );
}

function Center() {
  return (
    <div className="flex w-[2392px] shrink-0 flex-col">
      <div className="flex h-[54px] bg-[#22252a]">
        <div className="flex w-[196px] items-center bg-[#282c35] pl-[21px]">
          <R2File className="w-[20px] h-[22px]" />
          <span className="ml-[10px] text-[24px] font-bold leading-none text-white">Sample</span>
          <svg viewBox="0 0 14 14" className="ml-[20px] w-[14px] h-[14px]" fill="none" stroke="#e8e8e8" strokeWidth="2.200">
            <path d="M1 1l12 12M13 1L1 13" />
          </svg>
        </div>
      </div>
      <Toolbar />
      <div className="flex h-[1454px]">
        <Palette />
        <BandList />
        <Canvas />
      </div>
      <div className="flex h-[60px] border-b-4 border-[#17191d] bg-[#22252a] text-[24px] leading-none">
        <div className="flex w-[116px] items-center justify-center bg-[#282c35] pb-[8px] text-white">Report</div>
        <div className="ml-[20px] flex items-center pb-[8px] text-[#b5b7ba]">Json</div>
        <div className="ml-[40px] flex items-center pb-[8px] text-[#b5b7ba]">Preview</div>
      </div>
      <BottomPanel />
    </div>
  );
}

function StatusBar() {
  return (
    <div className="flex h-[46px] items-center justify-between bg-[#1f2226] pl-[24px] pr-[24px] text-[22px] leading-none text-[#d8d8da]">
      <span>R2 Designer with RealReport</span>
      <div className="flex items-center">
        <span>Sample</span>
        <span className="ml-[41px]">report.page.body.cbox.cbox</span>
        <svg viewBox="0 0 20 20" className="ml-[25px] mb-[4px] w-[20px] h-[20px]" fill="none" stroke="#d8d8da" strokeWidth="1.300">
          <circle cx="10" cy="10" r="9" />
          <circle cx="10" cy="7.500" r="3.500" />
          <path d="M3.500 16c1.500-3 4-4 6.500-4s5 1 6.500 4" />
        </svg>
        <span className="ml-[5px]">EVALUATION</span>
        <svg viewBox="0 0 20 22" className="ml-[26px] mb-[4px] w-[19px] h-[21px]" fill="none" stroke="#d8d8da" strokeWidth="1.300">
          <circle cx="10" cy="12.500" r="8.500" />
          <path d="M6.500 1h7M10 1v3M10 12.500V7" />
        </svg>
        <span className="ml-[7px]">2022. 12. 1.</span>
        <span className="ml-[22px]">2022. 3. 23.</span>
      </div>
    </div>
  );
}

export default function App() {
  return (
    <div className={`flex h-[2240px] w-[3584px] flex-col overflow-hidden bg-[#22252a] ${SANS}`}>
      <div className="flex h-[44px] items-center justify-center bg-[#22252a] text-[24px] leading-none text-[#ececee]">R2 Designer</div>
      <div className="flex h-[2150px]">
        <Sidebar />
        <Explorer />
        <Center />
        <Inspector />
      </div>
      <StatusBar />
    </div>
  );
}
